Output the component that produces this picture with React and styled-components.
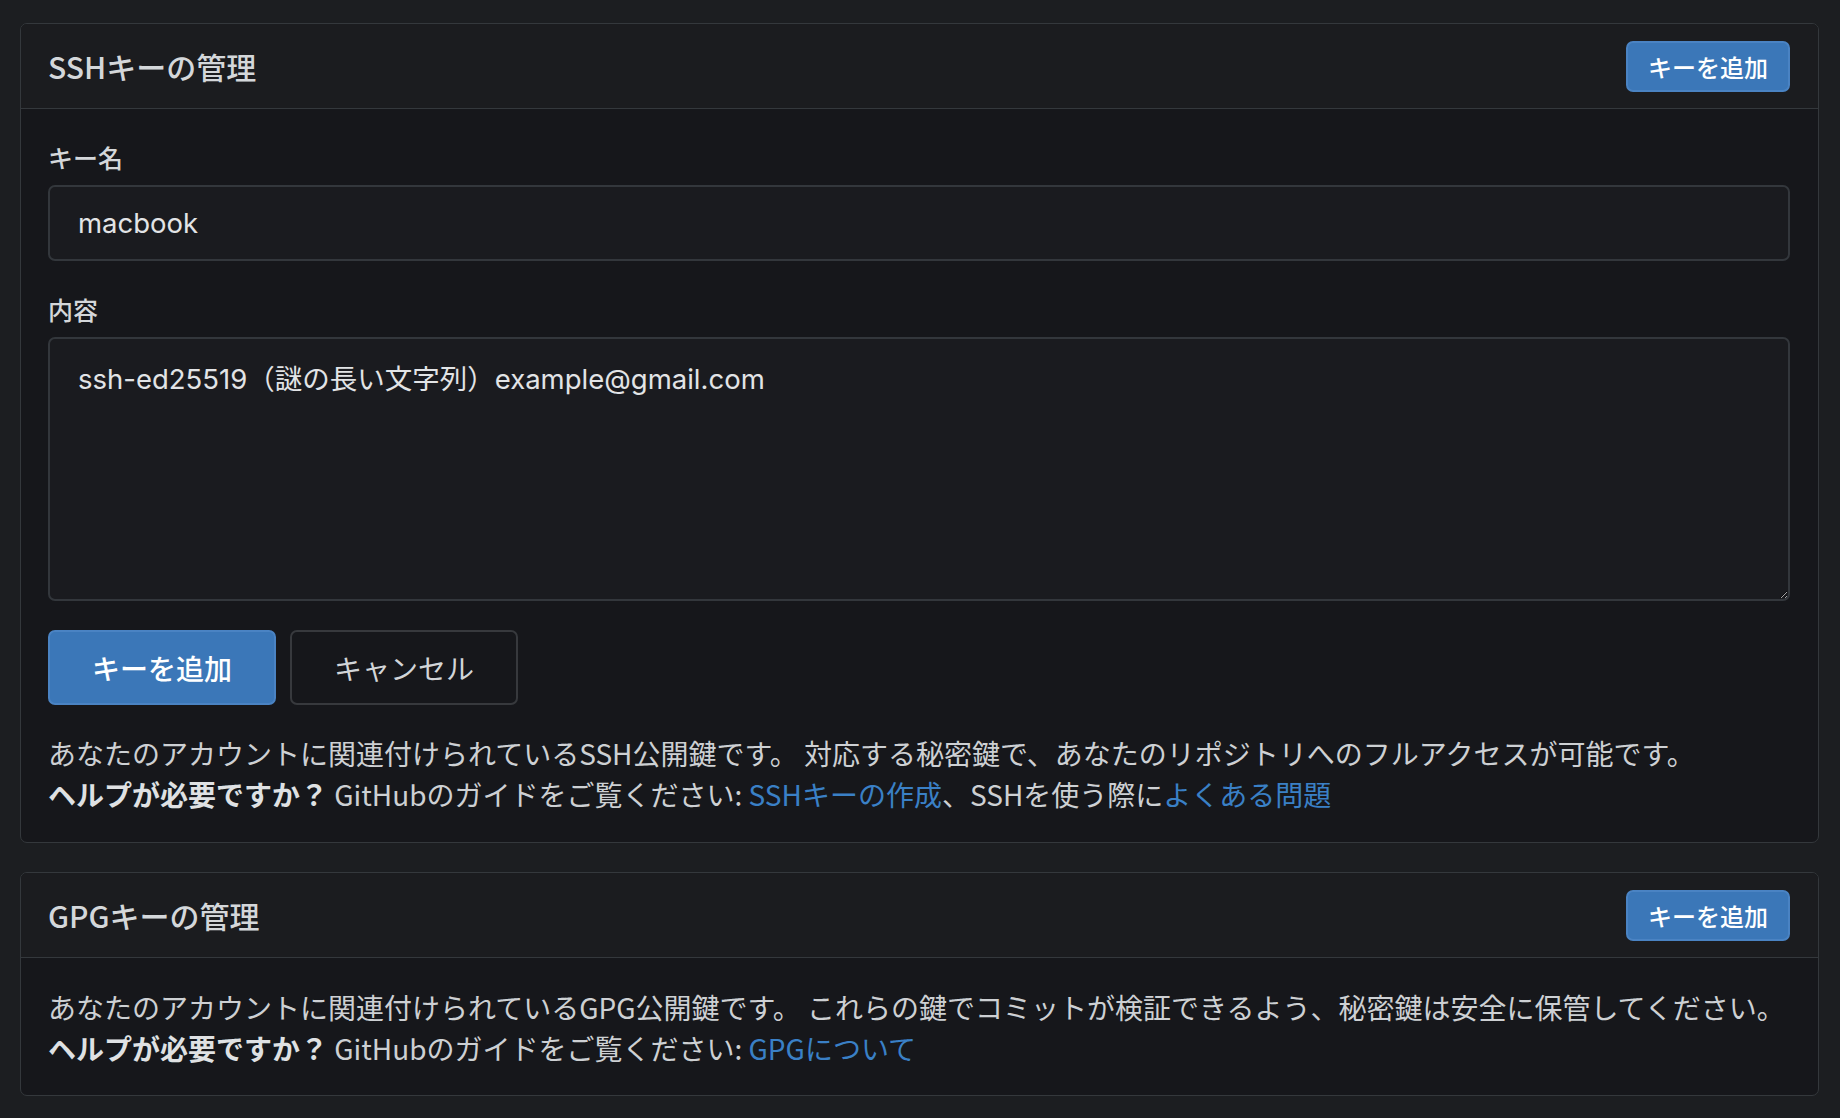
import React from 'react'
import styled, { createGlobalStyle } from 'styled-components'

const GlobalStyle = createGlobalStyle`
	html, body {
		margin: 0;
		padding: 0;
		background: #1c1e21;
		color-scheme: dark;
	}
	body {
		font-family: "Noto Sans CJK JP", "Noto Sans", sans-serif;
		color: #d2d5d8;
	}
`

const Page = styled.div`
	padding: 23px 21px 24px 20px;
	display: flex;
	flex-direction: column;
	gap: 29px;
`

const Card = styled.section`
	border: 1px solid #34383c;
	border-radius: 7px;
	overflow: hidden;
	background: #16171b;
`

const CardHeader = styled.header`
	display: flex;
	align-items: center;
	justify-content: space-between;
	height: 84px;
	padding: 0 28px 0 27px;
	background: #1b1c1f;
	border-bottom: 1px solid #34383c;
`

const Title = styled.h2`
	margin: 0;
	font-size: 30px;
	font-weight: 500;
	color: #d4d7da;
	letter-spacing: 0;
`

const Button = styled.button`
	font-family: "Noto Sans CJK JP", sans-serif;
	border-radius: 7px;
	cursor: pointer;
	display: inline-flex;
	align-items: center;
	justify-content: center;
	padding: 0;
	height: ${p => (p.$small ? '51px' : '75px')};
	width: ${p => (p.$small ? '164px' : '228px')};
	font-size: ${p => (p.$small ? '24px' : '28px')};
	font-weight: ${p => (p.$primary ? 500 : 400)};
	color: ${p => (p.$primary ? '#ffffff' : '#d2d5d8')};
	background: ${p => (p.$primary ? '#3b77b8' : 'transparent')};
	border: 2px solid ${p => (p.$primary ? '#4a83c3' : '#37393d')};
`

const CardBody = styled.div`
	padding: ${p => (p.$form ? '30px 28px 27px 27px' : '29px 28px 26px 27px')};
	display: flex;
	flex-direction: column;
`

const Field = styled.label`
	display: flex;
	flex-direction: column;
	gap: 10px;
	margin-bottom: ${p => p.$gap || 0};
`

const Label = styled.span`
	font-size: 25px;
	font-weight: 500;
	line-height: 36px;
	color: #d4d7da;
`

const TextInput = styled.input`
	box-sizing: border-box;
	height: 76px;
	width: 100%;
	padding: 0 28px;
	font-family: Inter, "Noto Sans CJK JP", sans-serif;
	font-size: 27.5px;
	color: #e2e4e6;
	background: #1a1b1f;
	border: 2px solid #33373c;
	border-radius: 7px;
	outline: none;
`

const TextArea = styled.textarea`
	box-sizing: border-box;
	height: 264px;
	width: 100%;
	padding: 20px 28px;
	font-family: Inter, "Noto Sans CJK JP", sans-serif;
	font-size: 27.5px;
	line-height: 40px;
	color: #e2e4e6;
	background: #1a1b1f;
	border: 2px solid #33373c;
	border-radius: 7px;
	outline: none;
	resize: vertical;
`

const Actions = styled.div`
	display: flex;
	gap: 14px;
	margin: 29px 0 28px;
`

const Help = styled.p`
	margin: 0;
	font-size: 28px;
	line-height: 41px;
	color: #cdd0d3;

	strong {
		font-weight: 700;
		color: #dfe1e3;
	}
`

const Link = styled.a`
	color: #3a80c6;
	text-decoration: none;
`

const App = () => {
	return (
		<>
			<GlobalStyle />
			<Page>
				<Card>
					<CardHeader>
						<Title>SSHキーの管理</Title>
						<Button $primary $small>キーを追加</Button>
					</CardHeader>
					<CardBody $form>
						<Field $gap="30px">
							<Label>キー名</Label>
							<TextInput defaultValue="macbook" />
						</Field>
						<Field>
							<Label>内容</Label>
							<TextArea defaultValue="ssh-ed25519（謎の長い文字列）example@gmail.com" />
						</Field>
						<Actions>
							<Button $primary>キーを追加</Button>
							<Button>キャンセル</Button>
						</Actions>
						<Help>
							あなたのアカウントに関連付けられているSSH公開鍵です。 対応する秘密鍵で、あなたのリポジトリへのフルアクセスが可能です。
							<br />
							<strong>ヘルプが必要ですか？</strong> GitHubのガイドをご覧ください: <Link href="#">SSHキーの作成</Link>、SSHを使う際に<Link href="#">よくある問題</Link>
						</Help>
					</CardBody>
				</Card>

				<Card>
					<CardHeader>
						<Title>GPGキーの管理</Title>
						<Button $primary $small>キーを追加</Button>
					</CardHeader>
					<CardBody>
						<Help>
							あなたのアカウントに関連付けられているGPG公開鍵です。 これらの鍵でコミットが検証できるよう、秘密鍵は安全に保管してください。
							<br />
							<strong>ヘルプが必要ですか？</strong> GitHubのガイドをご覧ください: <Link href="#">GPGについて</Link>
						</Help>
					</CardBody>
				</Card>
			</Page>
		</>
	)
}

export default App
